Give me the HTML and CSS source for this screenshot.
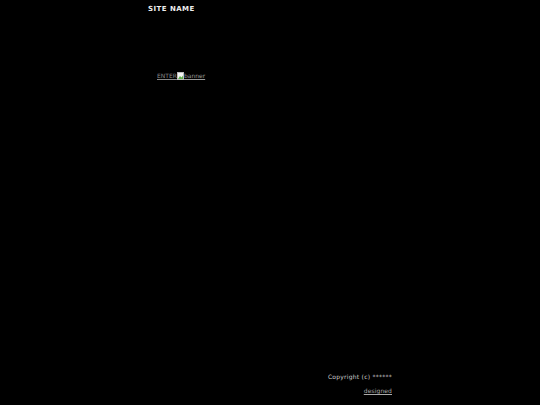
FILE: index.html
```html
<!DOCTYPE html>
<html>
<head>
<meta charset="utf-8">
<link rel="stylesheet" href="styles.css">
</head>
<body>
<div class="page">
  <header class="site-name">SITE NAME</header>
  <div class="enter-row">
    <a class="enter" href="#">ENTER</a><span class="banner"><svg class="banner-icon" width="7" height="8" viewBox="0 0 7 8"><rect x="0.5" y="0.5" width="6" height="7" fill="#f4f4f4" stroke="#bbb" stroke-width="1"/><path d="M1 7 L3 4 L4.5 5.5 L6 3.5 L6 7 Z" fill="#5fae4a"/></svg><a class="banner-alt" href="#">banner</a></span>
  </div>
  <div class="spacer"></div>
  <footer class="footer">
    <div class="copyright">Copyright (c) ******</div>
    <a class="designed" href="#">designed</a>
  </footer>
</div>
</body>
</html>
```
FILE: styles.css
```css
html, body {
  margin: 0;
  padding: 0;
  background: #000;
  height: 100%;
}
.page {
  width: 244px;
  height: 405px;
  margin: 0 auto;
  display: flex;
  flex-direction: column;
  font-family: "DejaVu Sans", Verdana, sans-serif;
}
.site-name {
  padding-top: 5px;
  font-size: 7px;
  font-weight: bold;
  letter-spacing: 0.45px;
  color: #eee;
  line-height: 9px;
}
.enter-row {
  margin-top: 58px;
  padding-left: 9px;
  font-size: 6px;
  line-height: 8px;
  display: flex;
  align-items: flex-end;
}
.enter {
  color: #888;
  text-decoration: underline;
}
.banner {
  display: inline-flex;
  align-items: flex-end;
}
.banner-icon {
  display: block;
}
.banner-alt {
  color: #999;
  text-decoration: underline;
}
.spacer {
  flex: 1;
}
.footer {
  text-align: right;
  padding-bottom: 10px;
  font-size: 6px;
}
.copyright {
  color: #ccc;
  line-height: 8px;
  margin-bottom: 6px;
  letter-spacing: 0.25px;
}
.designed {
  color: #aaa;
  text-decoration: underline;
  line-height: 8px;
  letter-spacing: 0.1px;
}
```
